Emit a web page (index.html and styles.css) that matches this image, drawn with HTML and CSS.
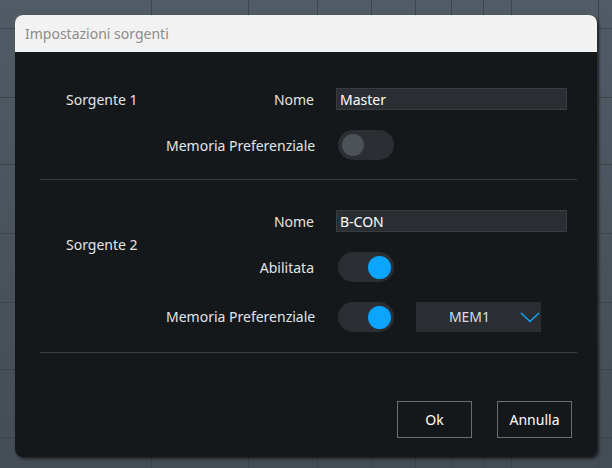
FILE: index.html
```html
<!DOCTYPE html>
<html>
  <head>
    <title>Impostazioni sorgenti</title>
    <link rel="stylesheet" href="styles.css">
  </head>
  <body>
    <div class="dialog">
      <div class="dialog-title">Impostazioni sorgenti</div>

      <div class="dialog-body">
        <!-- Sorgente 1 -->
        <div class="source source-1">
          <div class="source-name">Sorgente 1</div>
          <label class="field-label">Nome</label>
          <input class="text-input" type="text" value="Master">
          <label class="field-label">Memoria Preferenziale</label>
          <div class="field-row">
            <span class="toggle"><span class="knob"></span></span>
          </div>
        </div>

        <div class="divider"></div>

        <!-- Sorgente 2 -->
        <div class="source source-2">
          <div class="source-name">Sorgente 2</div>
          <label class="field-label">Nome</label>
          <input class="text-input" type="text" value="B-CON">
          <label class="field-label">Abilitata</label>
          <div class="field-row">
            <span class="toggle on"><span class="knob"></span></span>
          </div>
          <label class="field-label last">Memoria Preferenziale</label>
          <div class="field-row last">
            <span class="toggle on"><span class="knob"></span></span>
            <div class="select">
              <span class="select-value">MEM1</span>
              <svg class="chevron" width="20" height="11" viewBox="0 0 20 11">
                <path d="M1 1 L10 9.5 L19 1" fill="none" stroke="#12a0f0" stroke-width="1.6"/>
              </svg>
            </div>
          </div>
        </div>

        <div class="divider"></div>

        <div class="dialog-footer">
          <button class="btn">Ok</button>
          <button class="btn">Annulla</button>
        </div>
      </div>
    </div>
  </body>
</html>
```

FILE: styles.css
```css
html, body {
  height: 100%;
}
body {
  margin: 0;
  padding: 15px 0 0 15px;
  box-sizing: border-box;
  font-family: "Noto Sans", "Open Sans", Arial, sans-serif;
  font-size: 14px;
  background-color: #4a535c;
  background-image:
    linear-gradient(90deg,
      transparent 0 151px, #3d444c 151px 152px,
      transparent 152px 248px, #3d444c 248px 249px,
      transparent 249px 317px, #3d444c 317px 318px,
      transparent 318px 371px, #3d444c 371px 372px,
      transparent 372px 415px, #3d444c 415px 416px,
      transparent 416px 451px, #3d444c 451px 452px,
      transparent 452px 483px, #3d444c 483px 484px,
      transparent 484px 511px, #3d444c 511px 512px,
      transparent 512px 598px, #3d444c 598px 599px,
      transparent 599px),
    linear-gradient(180deg,
      transparent 0 28px, #3d444c 28px 29px,
      transparent 29px 97px, #3d444c 97px 98px,
      transparent 98px 164px, #3d444c 164px 165px,
      transparent 165px 233px, #3d444c 233px 234px,
      transparent 234px 302px, #3d444c 302px 303px,
      transparent 303px 369px, #3d444c 369px 370px,
      transparent 370px 437px, #3d444c 437px 438px,
      transparent 438px),
    linear-gradient(180deg, #515b65, #444c55);
}

.dialog {
  width: 582px;
  height: 442px;
  border-radius: 8px;
  overflow: hidden;
  background: #15181b;
  box-shadow: 2px 2px 3px rgba(0, 0, 0, 0.55);
  display: flex;
  flex-direction: column;
}
.dialog-title {
  height: 37px;
  line-height: 37px;
  padding-left: 10px;
  background: #f2f2f2;
  color: #8b8b8b;
}
.dialog-body {
  padding: 32px 20px 19px 25px;
  color: #e4e4e4;
}

.source {
  display: grid;
  grid-template-columns: 78px 148px 231px;
  grid-auto-rows: 30px;
  column-gap: 22px;
  row-gap: 16px;
  align-items: center;
  padding-left: 26px;
}
.source-1 {
  padding-bottom: 19px;
}
.source-2 {
  grid-template-rows: 30px 30px 34px;
  padding-top: 26px;
  padding-bottom: 20px;
}
.source-name {
  grid-column: 1;
  grid-row: 1;
  white-space: nowrap;
}
.source-2 .source-name {
  grid-row: 1 / 3;
}
.field-label {
  grid-column: 2;
  text-align: right;
  white-space: nowrap;
}
.field-label.last,
.field-row.last {
  align-self: end;
  height: 30px;
  line-height: 30px;
}
.field-row {
  display: flex;
  align-items: center;
  gap: 22px;
  padding-left: 2px;
}
.divider {
  height: 1px;
  background: #393c40;
}

.text-input {
  box-sizing: border-box;
  width: 231px;
  height: 22px;
  padding: 0 3px;
  border: 1px solid #383c40;
  background: #2a2e32;
  color: #ffffff;
  font-family: inherit;
  font-size: 14px;
  outline: none;
}

.toggle {
  position: relative;
  display: inline-block;
  width: 56px;
  height: 30px;
  border-radius: 15px;
  background: #2b2f33;
}
.toggle .knob {
  position: absolute;
  top: 4px;
  left: 4px;
  width: 22px;
  height: 22px;
  border-radius: 50%;
  background: #4d5259;
}
.toggle.on .knob {
  left: auto;
  right: 3px;
  top: 3.5px;
  width: 23px;
  height: 23px;
  background: #0aa5ff;
}

.select {
  position: relative;
  width: 125px;
  height: 30px;
  background: #2a2e32;
  display: flex;
  align-items: center;
}
.select-value {
  flex: 1;
  text-align: center;
  padding-right: 18px;
  color: #dcdcea;
}
.chevron {
  position: absolute;
  right: 1px;
  top: 10px;
}

.dialog-footer {
  display: flex;
  justify-content: flex-end;
  gap: 25px;
  padding-top: 48px;
  padding-right: 5px;
}
.btn {
  width: 75px;
  height: 37px;
  border: 1px solid #6a6e72;
  background: transparent;
  color: #ffffff;
  font-family: inherit;
  font-size: 14px;
  cursor: pointer;
}
```
